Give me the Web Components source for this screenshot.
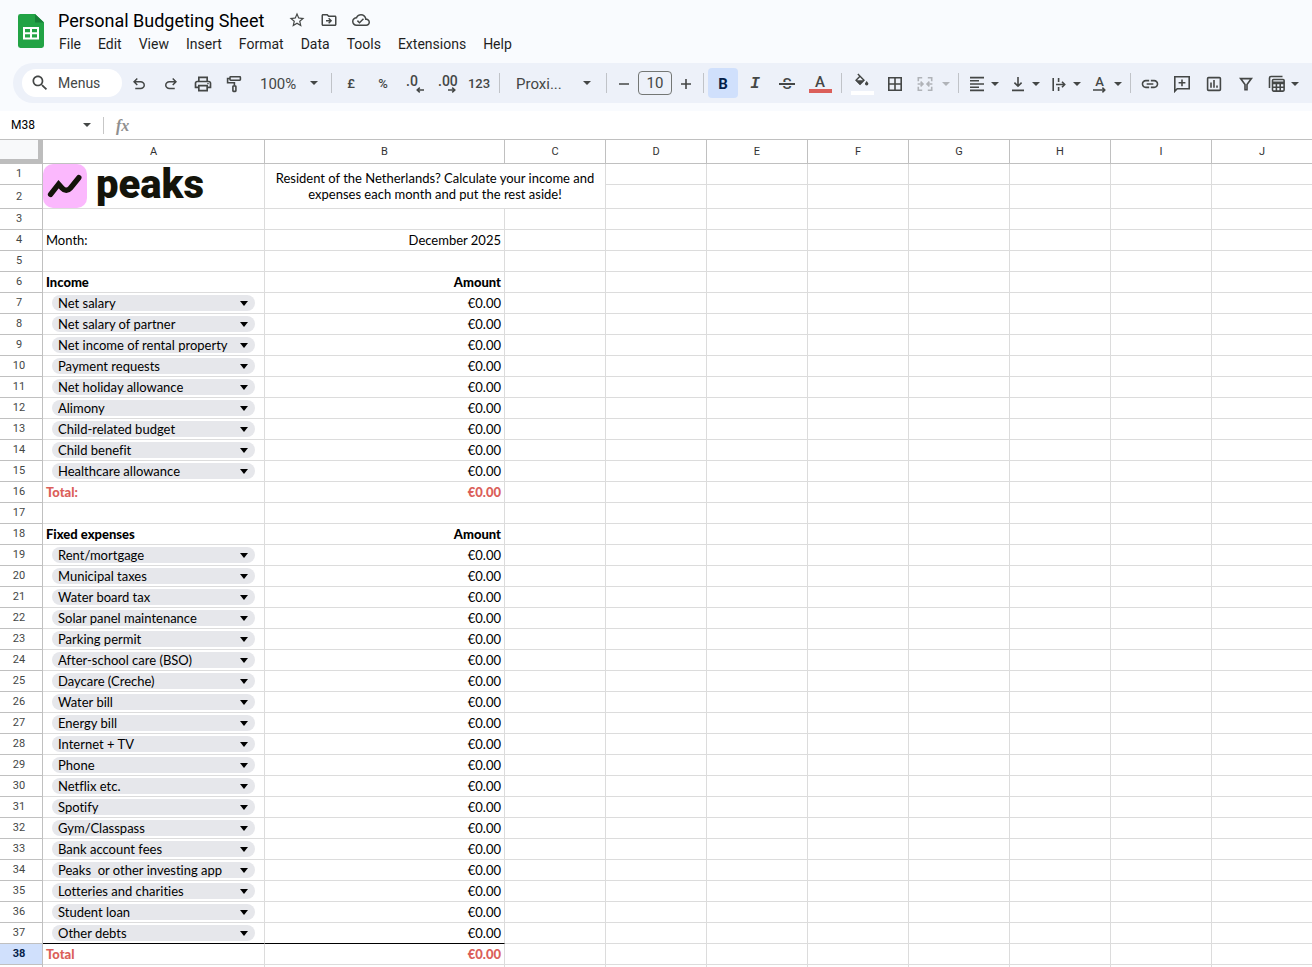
<!DOCTYPE html>
<html lang="en">
<head>
<meta charset="utf-8">
<meta name="viewport" content="width=device-width, initial-scale=1">
<title>Personal Budgeting Sheet</title>
<style>
  html, body {
    height: 100%;
  }

  body {
    margin: 0;
    overflow: hidden;
    background: #f9fbfe;
    color: #1f1f1f;
    font-family: Roboto, "Liberation Sans", sans-serif;
  }
</style>
</head>
<body>
<budget-app></budget-app>

<script>
// Icon bodies. Entries drawn on the 24 grid are filled, the 20 grid ones are stroked.
const ICONS = {
  star: [24, `<path d="M22 9.24l-7.19-.62L12 2 9.19 8.63 2 9.24l5.46 4.73L5.82 21 12 17.27 18.18 21l-1.63-7.03L22 9.24zM12 15.4l-3.76 2.27 1-4.28-3.32-2.88 4.38-.38L12 6.1l1.71 4.04 4.38.38-3.32 2.88 1 4.28L12 15.4z"/>`],
  move: [24, `<path d="M20 6h-8l-2-2H4c-1.1 0-2 .9-2 2v12c0 1.1.9 2 2 2h16c1.1 0 2-.9 2-2V8c0-1.1-.9-2-2-2zm0 12H4V6h5.17l2 2H20v10z"/><path d="M12.2 17l4-4-4-4-1.3 1.3 1.7 1.7H8v2h4.6l-1.7 1.7z"/>`],
  cloud: [24, `<path d="M19.35 10.04C18.67 6.59 15.64 4 12 4 9.11 4 6.6 5.64 5.35 8.04 2.34 8.36 0 10.91 0 14c0 3.31 2.69 6 6 6h13c2.76 0 5-2.24 5-5 0-2.64-2.05-4.78-4.65-4.96zM19 18H6c-2.21 0-4-1.79-4-4s1.79-4 4-4h.71C7.37 7.69 9.48 6 12 6c3.04 0 5.5 2.46 5.5 5.5v.5H19c1.66 0 3 1.34 3 3s-1.34 3-3 3zm-9-3.82l-2.09-2.09L6.5 13.5 10 17l6.01-6.01-1.41-1.41z"/>`],
  search: [24, `<path d="M15.5 14h-.79l-.28-.27C15.41 12.59 16 11.11 16 9.5 16 5.91 13.09 3 9.5 3S3 5.91 3 9.5 5.91 16 9.5 16c1.61 0 3.09-.59 4.23-1.57l.27.28v.79l5 4.99L20.49 19l-4.99-5zm-6 0C7.01 14 5 11.99 5 9.5S7.01 5 9.5 5 14 7.01 14 9.5 11.99 14 9.5 14z"/>`],
  undo: [24, `<path d="M7 19v-2h7.1q1.575 0 2.737-1Q18 15 18 13.5T16.838 11Q15.675 10 14.1 10H7.8l2.6 2.6L9 14 4 9l5-5 1.4 1.4L7.8 8h6.3q2.425 0 4.163 1.575Q20 11.15 20 13.5t-1.737 3.925Q16.525 19 14.1 19Z"/>`],
  redo: [24, `<path transform="matrix(-1 0 0 1 24 0)" d="M7 19v-2h7.1q1.575 0 2.737-1Q18 15 18 13.5T16.838 11Q15.675 10 14.1 10H7.8l2.6 2.6L9 14 4 9l5-5 1.4 1.4L7.8 8h6.3q2.425 0 4.163 1.575Q20 11.15 20 13.5t-1.737 3.925Q16.525 19 14.1 19Z"/>`],
  print: [24, `<path d="M19 8h-1V3H6v5H5c-1.66 0-3 1.34-3 3v6h4v4h12v-4h4v-6c0-1.66-1.34-3-3-3zM8 5h8v3H8V5zm8 12v2H8v-4h8v2zm2-2v-2H6v2H4v-4c0-.55.45-1 1-1h14c.55 0 1 .45 1 1v4h-2z"/><circle cx="18" cy="11.5" r="1"/>`],
  link: [24, `<path d="M3.9 12c0-1.71 1.39-3.1 3.1-3.1h4V7H7c-2.76 0-5 2.24-5 5s2.24 5 5 5h4v-1.9H7c-1.71 0-3.1-1.39-3.1-3.1zM8 13h8v-2H8v2zm9-6h-4v1.9h4c1.71 0 3.1 1.39 3.1 3.1s-1.39 3.1-3.1 3.1h-4V17h4c2.76 0 5-2.24 5-5s-2.24-5-5-5z"/>`],
  paint: [20, `<rect x="5" y="2.8" width="10.4" height="3.4" rx=".6"/><path d="M5 4.5H2.6v4.3h6.8v3"/><rect x="7.9" y="12" width="3" height="5.4" rx=".6"/>`],
  minus: [20, `<path d="M5 10h10"/>`],
  plus: [20, `<path d="M5 10h10M10 5v10"/>`],
  bucket: [20, `<path d="M5.4 1.2l6.8 6.8-4.4 4.4L3.4 8l4.4-4.4"/><path fill="currentColor" stroke="none" d="M3 8h9.6l-4.8 5z"/><path fill="currentColor" stroke="none" d="M15.2 8.8c1.2 1.6 1.9 2.4 1.9 3.2a1.9 1.9 0 0 1-3.8 0c0-.8.7-1.6 1.9-3.2z"/>`],
  borders: [20, `<path d="M3.8 3.8h12.4v12.4H3.8zM10 3.8v12.4M3.8 10h12.4"/>`],
  merge: [20, `<path d="M7.2 3.8H3.3v3.4M12.8 3.8h3.9v3.4M7.2 16.2H3.3v-3.4M12.8 16.2h3.9v-3.4M2.6 10h5M5.6 7.6L8 10l-2.4 2.4M17.4 10h-5M14.4 7.6L12 10l2.4 2.4"/>`],
  align: [20, `<path d="M3 3.6h14M3 6.8h9M3 10h14M3 13.2h9M3 16.4h14"/>`],
  bottom: [20, `<path d="M10 3v9M6.4 8.6L10 12.2l3.6-3.6M4 16.4h12"/>`],
  wrap: [20, `<path d="M4.2 4v13M9.6 4v4M9.6 13v4M7 10.5h8.6M13 7.8l2.7 2.7-2.7 2.7"/>`],
  comment: [20, `<path d="M2.8 17.2V2.8h14.4v12H5.2zM10 5.4v6.8M6.6 8.8h6.8"/>`],
  chart: [20, `<rect x="3.6" y="3.6" width="12.8" height="12.8" rx="1"/><path d="M7 8.6v5.2M10 6v7.8M13 11.4v2.4"/>`],
  filter: [20, `<path d="M4.6 4.6h10.8L11 10.4v5.4H9v-5.4z"/>`],
  tables: [20, `<path d="M2.5 14V4q0-1.5 1.5-1.5h11.5"/><rect x="5.5" y="5.5" width="11.6" height="11.6" rx="1"/><path d="M5.5 8.2h11.6M5.5 9.4h11.6M5.5 13.2h11.6M9.4 9v8M13.2 9v8"/>`]
};

class SheetIcon extends HTMLElement {
  connectedCallback() {
    const [grid, body] = ICONS[this.getAttribute("name")];
    const paint = grid === 24
      ? 'fill="currentColor"'
      : 'fill="none" stroke="currentColor" stroke-width="1.6"';
    this.attachShadow({ mode: "open" }).innerHTML = `
      <style>
        :host { display: block; flex: none; width: 20px; height: 20px; }
        :host([small]) { width: 18px; height: 18px; }
        svg { display: block; width: 100%; height: 100%; }
      </style>
      <svg viewBox="0 0 ${grid} ${grid}" ${paint} aria-hidden="true">${body}</svg>
    `;
  }
}

// Small downward triangle used by every drop-down
class DropArrow extends HTMLElement {
  connectedCallback() {
    this.attachShadow({ mode: "open" }).innerHTML = `
      <style>
        :host {
          display: block;
          flex: none;
          width: 0;
          height: 0;
          border: 4px solid transparent;
          border-top-color: currentColor;
          border-bottom-width: 0;
          pointer-events: none;
        }
        :host([large]) { border-top-width: 5px; }
      </style>
    `;
  }
}

class ToolButton extends HTMLElement {
  connectedCallback() {
    const arrow = this.hasAttribute("menu") ? "<drop-arrow></drop-arrow>" : "";
    const off = this.hasAttribute("off") ? "disabled" : "";
    this.attachShadow({ mode: "open" }).innerHTML = `
      <style>
        :host { display: block; flex: none; width: 32px; }
        :host([narrow]) { width: 27px; }
        :host([wide]) { width: 34px; }
        :host([menu]) { width: 41px; }
        :host([menu][off]) { width: 43px; }
        button {
          display: flex;
          align-items: center;
          justify-content: center;
          gap: 4px;
          box-sizing: border-box;
          width: calc(100% - 2px);
          height: 30px;
          margin: 0 1px;
          padding: 2px 0 0;
          border: 0;
          border-radius: 4px;
          background: none;
          color: #444746;
          font: 500 13px/16px Roboto, "Liberation Sans", sans-serif;
        }
        :host([menu][off]) button { gap: 7px; }
        :host([pressed]) button { background: #d0e0fc; color: #041e49; }
        button:disabled { color: #b0b3b8; }
      </style>
      <button type="button" aria-label="${this.getAttribute("label")}" ${off}><slot></slot>${arrow}</button>
    `;
  }
}

class ToolDivider extends HTMLElement {
  connectedCallback() {
    this.attachShadow({ mode: "open" }).innerHTML = `
      <style>
        :host { display: flex; flex: none; justify-content: center; width: 8px; }
        span { width: 1px; height: 20px; background: #c0c3c8; }
      </style>
      <span></span>
    `;
  }
}

class ToolSelect extends HTMLElement {
  connectedCallback() {
    this.attachShadow({ mode: "open" }).innerHTML = `
      <style>
        :host { display: grid; flex: none; align-items: center; width: 76px; color: #444746; }
        :host([font]) { width: 99px; }
        select, drop-arrow { grid-area: 1 / 1; }
        select {
          appearance: none;
          width: 100%;
          height: 30px;
          margin: 0;
          padding: 2px 20px 0 9px;
          border: 0;
          background: none;
          color: inherit;
          font: 400 15px/18px Roboto, "Liberation Sans", sans-serif;
        }
        :host([font]) select { padding-left: 13px; }
        drop-arrow { justify-self: end; margin-right: 9px; }
        :host([font]) drop-arrow { margin-right: 11px; }
      </style>
      <select aria-label="${this.getAttribute("label")}"><option>${this.getAttribute("value")}</option></select>
      <drop-arrow></drop-arrow>
    `;
  }
}

class SheetHeader extends HTMLElement {
  connectedCallback() {
    const menus = ["File", "Edit", "View", "Insert", "Format", "Data", "Tools", "Extensions", "Help"];
    this.attachShadow({ mode: "open" }).innerHTML = `
      <style>
        :host { display: flex; padding: 6px 16px 9px 18px; }
        .logo { flex: none; width: 26px; height: 34px; margin: 8px 7px 0 0; }
        .title { display: flex; align-items: center; height: 28px; padding-left: 7px; }
        h1 { margin: 0 24px 0 0; padding-top: 2px; color: #000; font-size: 18px; font-weight: 400; line-height: 26px; }
        .icons { display: flex; gap: 14px; }
        nav { display: flex; gap: 1px; height: 20px; }
        button {
          display: flex;
          align-items: center;
          padding: 0;
          border: 0;
          background: none;
          color: #444746;
        }
        nav button { padding: 0 8px; color: #1f1f1f; font: 400 14px/20px Roboto, "Liberation Sans", sans-serif; }
      </style>
      <svg class="logo" viewBox="0 0 26 34" aria-hidden="true">
        <path fill="#22a345" d="M2.400 0H17l9 8.500V31.600A2.400 2.400 0 0 1 23.600 34H2.400A2.400 2.400 0 0 1 0 31.600V2.400A2.400 2.400 0 0 1 2.400 0z"/>
        <path fill="#178038" d="M17 0l9 8.500h-9z"/>
        <path fill="#fff" fill-rule="evenodd" d="M5 13h16v12.500H5zM7 15v3.200h5V15zM14 15v3.200h5V15zM7 20.200v3.200h5v-3.200zM14 20.200v3.200h5v-3.200z"/>
      </svg>
      <div>
        <div class="title">
          <h1>Personal Budgeting Sheet</h1>
          <div class="icons">
            <button type="button" aria-label="Star"><sheet-icon small name="star"></sheet-icon></button>
            <button type="button" aria-label="Move"><sheet-icon small name="move"></sheet-icon></button>
            <button type="button" aria-label="Document status"><sheet-icon small name="cloud"></sheet-icon></button>
          </div>
        </div>
        <nav>${menus.map((menu) => `<button type="button">${menu}</button>`).join("")}</nav>
      </div>
    `;
  }
}

class SheetToolbar extends HTMLElement {
  connectedCallback() {
    this.attachShadow({ mode: "open" }).innerHTML = `
      <style>
        :host {
          display: flex;
          align-items: center;
          height: 40px;
          margin: 0 0 8px 13px;
          padding-left: 9px;
          border-radius: 20px 0 0 20px;
          background: #edf1f9;
          overflow: hidden;
        }
        .menus {
          display: flex;
          flex: none;
          align-items: center;
          gap: 8px;
          width: 100px;
          height: 28px;
          margin-right: 1px;
          padding: 0 8px;
          border: 0;
          border-radius: 14px;
          background: #fff;
          color: #444746;
          font: 400 14px/20px Roboto, "Liberation Sans", sans-serif;
        }
        .size {
          box-sizing: border-box;
          flex: none;
          width: 34px;
          height: 24px;
          margin: 0 0 0 1px;
          padding: 0;
          border: 1px solid #747775;
          border-radius: 4px;
          background: none;
          color: #444746;
          font: 400 15px/20px Roboto, "Liberation Sans", sans-serif;
          text-align: center;
        }
        .decimal { display: flex; flex-direction: column; width: 18px; font-size: 14px; line-height: 12px; text-align: left; }
        .decimal svg { align-self: flex-end; width: 8px; height: 6px; }
        .bold { font-size: 15px; font-weight: 700; }
        .italic { font: italic 700 16px/16px "Liberation Mono", monospace; }
        .strike { position: relative; width: 16px; font-size: 15px; }
        .strike::after {
          content: "";
          position: absolute;
          inset: 6px 0 auto;
          height: 2px;
          border: solid #edf1f9;
          border-width: 1px 0;
          background: #444746;
        }
        .swatch { display: flex; flex-direction: column; align-items: center; font-size: 15px; line-height: 14px; }
        .swatch::after { content: ""; width: 23px; height: 4px; background: #db5f5a; }
        .fill { height: 22px; justify-content: space-between; }
        .fill sheet-icon { height: 18px; }
        .fill::after { background: #fff; }
        .rotate { display: flex; flex-direction: column; align-items: center; width: 20px; line-height: 11px; }
        .rotate svg { width: 13px; height: 6px; }
        svg { fill: none; stroke: currentColor; stroke-width: 1.5; }
      </style>
      <button class="menus" type="button"><sheet-icon name="search"></sheet-icon>Menus</button>
      <tool-button label="Undo"><sheet-icon small name="undo"></sheet-icon></tool-button>
      <tool-button label="Redo"><sheet-icon small name="redo"></sheet-icon></tool-button>
      <tool-button label="Print"><sheet-icon name="print"></sheet-icon></tool-button>
      <tool-button label="Paint format"><sheet-icon name="paint"></sheet-icon></tool-button>
      <tool-select label="Zoom" value="100%"></tool-select>
      <tool-divider></tool-divider>
      <tool-button label="Format as currency">£</tool-button>
      <tool-button label="Format as percent">%</tool-button>
      <tool-button label="Decrease decimal places">
        <span class="decimal">.0<svg viewBox="0 0 8 6"><path d="M8 3H1.500M3.800.6L1.200 3l2.600 2.400"/></svg></span>
      </tool-button>
      <tool-button label="Increase decimal places">
        <span class="decimal">.00<svg viewBox="0 0 8 6"><path d="M0 3h6.500M4.200.6L6.800 3 4.200 5.400"/></svg></span>
      </tool-button>
      <tool-button label="More formats">123</tool-button>
      <tool-divider></tool-divider>
      <tool-select font label="Font" value="Proxi..."></tool-select>
      <tool-divider></tool-divider>
      <tool-button narrow label="Decrease font size"><sheet-icon name="minus"></sheet-icon></tool-button>
      <input class="size" aria-label="Font size" value="10">
      <tool-button narrow label="Increase font size"><sheet-icon name="plus"></sheet-icon></tool-button>
      <tool-divider></tool-divider>
      <tool-button pressed label="Bold"><span class="bold">B</span></tool-button>
      <tool-button label="Italic"><span class="italic">I</span></tool-button>
      <tool-button label="Strikethrough"><span class="strike">S</span></tool-button>
      <tool-button wide label="Text color"><span class="swatch">A</span></tool-button>
      <tool-divider></tool-divider>
      <tool-button wide label="Fill color"><span class="swatch fill"><sheet-icon name="bucket"></sheet-icon></span></tool-button>
      <tool-button label="Borders"><sheet-icon name="borders"></sheet-icon></tool-button>
      <tool-button menu off label="Merge cells"><sheet-icon name="merge"></sheet-icon></tool-button>
      <tool-divider></tool-divider>
      <tool-button menu label="Horizontal align"><sheet-icon name="align"></sheet-icon></tool-button>
      <tool-button menu label="Vertical align"><sheet-icon name="bottom"></sheet-icon></tool-button>
      <tool-button menu label="Text wrapping"><sheet-icon name="wrap"></sheet-icon></tool-button>
      <tool-button menu label="Text rotation">
        <span class="rotate">A<svg viewBox="0 0 13 6"><path d="M0 3h11.500M9.400.6L11.800 3 9.400 5.400"/></svg></span>
      </tool-button>
      <tool-divider></tool-divider>
      <tool-button label="Insert link"><sheet-icon name="link"></sheet-icon></tool-button>
      <tool-button label="Insert comment"><sheet-icon name="comment"></sheet-icon></tool-button>
      <tool-button label="Insert chart"><sheet-icon name="chart"></sheet-icon></tool-button>
      <tool-button label="Create a filter"><sheet-icon name="filter"></sheet-icon></tool-button>
      <tool-button menu label="Table views"><sheet-icon name="tables"></sheet-icon></tool-button>
    `;
  }
}

class FormulaBar extends HTMLElement {
  connectedCallback() {
    this.attachShadow({ mode: "open" }).innerHTML = `
      <style>
        :host { display: flex; align-items: center; height: 28px; background: #fff; color: #444746; }
        input { min-width: 0; padding: 0; border: 0; outline: 0; background: none; color: #000; font: 400 12px/20px Roboto, "Liberation Sans", sans-serif; }
        .name { width: 72px; padding-left: 11px; }
        .formula { flex: 1; }
        .line { width: 1px; height: 17px; margin: 0 12px; background: #c7c7c7; }
        .fx { width: 24px; padding-top: 2px; color: #8f8f8f; font: italic 700 16px/20px "Liberation Serif", serif; }
      </style>
      <input class="name" aria-label="Name box" value="M38">
      <drop-arrow></drop-arrow>
      <span class="line"></span>
      <span class="fx">fx</span>
      <input class="formula" aria-label="Formula">
    `;
  }
}

// Drop-down chip inside a cell
class CellChip extends HTMLElement {
  connectedCallback() {
    this.attachShadow({ mode: "open" }).innerHTML = `
      <style>
        :host { display: grid; align-items: center; margin: 0 9px; color: #000; }
        select, drop-arrow { grid-area: 1 / 1; }
        select {
          appearance: none;
          width: 100%;
          height: 16px;
          margin: 0;
          padding: 0 18px 0 6px;
          border: 0;
          border-radius: 8px;
          background: #e6e7eb;
          color: inherit;
          font: inherit;
          font-variant-ligatures: none;
          line-height: 16px;
          white-space: pre;
        }
        drop-arrow { justify-self: end; margin-right: 7px; }
      </style>
      <select aria-label="Category"></select>
      <drop-arrow large></drop-arrow>
    `;
    this.shadowRoot.querySelector("select").add(new Option(this.getAttribute("value")));
  }
}

class PeaksLogo extends HTMLElement {
  connectedCallback() {
    this.attachShadow({ mode: "open" }).innerHTML = `
      <style>
        :host { display: flex; gap: 9px; height: 44px; color: #14140a; }
        svg { flex: none; width: 44px; height: 44px; }
        span { font: 900 40px/42px Roboto, "Liberation Sans", sans-serif; }
      </style>
      <svg viewBox="0 0 44 44" aria-hidden="true">
        <rect width="44" height="44" rx="10" fill="#fbb8fd"/>
        <path fill="none" stroke="#14140a" stroke-width="5.4" stroke-linecap="round" d="M7.600 30.400L15.600 20.200 19 24C21.500 27 25 27 27.500 24L35.800 13.700"/>
      </svg>
      <span>peaks</span>
    `;
  }
}

const INCOME = [
  "Net salary", "Net salary of partner", "Net income of rental property", "Payment requests",
  "Net holiday allowance", "Alimony", "Child-related budget", "Child benefit", "Healthcare allowance"
];

const EXPENSES = [
  "Rent/mortgage", "Municipal taxes", "Water board tax", "Solar panel maintenance", "Parking permit",
  "After-school care (BSO)", "Daycare (Creche)", "Water bill", "Energy bill", "Internet + TV", "Phone",
  "Netflix etc.", "Spotify", "Gym/Classpass", "Bank account fees", "Peaks\u00a0 or other investing app",
  "Lotteries and charities", "Student loan", "Other debts"
];

const chipRow = (value) => ({ a: `<cell-chip value="${value}"></cell-chip>`, b: "€0.00" });

// Rows 3 and up; the first two hold the merged banner cells
const ROWS = [
  {},
  { a: "Month:", b: "December 2025" },
  {},
  { a: "Income", b: "Amount", type: "bold" },
  ...INCOME.map(chipRow),
  { a: "Total:", b: "€0.00", type: "total" },
  {},
  { a: "Fixed expenses", b: "Amount", type: "bold" },
  ...EXPENSES.map(chipRow),
  { a: "Total", b: "€0.00", type: "total sum" }
];

class SheetGrid extends HTMLElement {
  connectedCallback() {
    const blanks = (count) => "<td></td>".repeat(count);
    const rows = ROWS.map((row, i) => `
      <tr class="${row.type || ""}">
        <th scope="row">${i + 3}</th>
        <td>${row.a || ""}</td>
        <td class="amount">${row.b || ""}</td>
        ${blanks(8)}
      </tr>`).join("");

    this.attachShadow({ mode: "open" }).innerHTML = `
      <style>
        :host { display: block; overflow: auto; scrollbar-width: none; border-top: 1px solid #c0c0c0; background: #fff; }
        table { table-layout: fixed; width: 1313px; border-collapse: separate; border-spacing: 0; }
        col { width: 101px; }
        .head { width: 43px; }
        .col-a { width: 222px; }
        .col-b { width: 240px; }
        th, td {
          box-sizing: border-box;
          height: 21px;
          border: solid #dcdcdc;
          border-width: 0 1px 1px 0;
        }
        th {
          padding: 0 4px 0 0;
          border-color: #c0c0c0;
          color: #444746;
          font: 400 11px/16px Roboto, "Liberation Sans", sans-serif;
        }
        thead th { height: 24px; padding: 0; color: #333; }
        thead th:first-child {
          border: solid #bdbdbd;
          border-width: 0 5px 5px 0;
          background: #f8f9fa;
        }
        td {
          padding: 0 3px;
          color: #000;
          font: 400 13px/16px Lato, "Liberation Sans", sans-serif;
          font-variant-ligatures: none;
          white-space: nowrap;
        }
        td:has(cell-chip) { padding: 0; }
        .tall > * { height: 24px; }
        .logo { padding: 0; vertical-align: top; }
        .intro { padding: 0 4px; text-align: center; white-space: normal; }
        .amount { text-align: right; }
        .bold td, .total td { font-weight: 900; }
        .total td { color: #db5f5a; }
        tr:has(+ .sum) td:nth-child(-n + 3) { border-bottom-color: #000; }
        .sum th { background: #d0e0fc; color: #041e49; font-weight: 700; }
      </style>
      <table>
        <colgroup>
          <col class="head"><col class="col-a"><col class="col-b"><col span="8">
        </colgroup>
        <thead>
          <tr><th></th>${[..."ABCDEFGHIJ"].map((letter) => `<th scope="col">${letter}</th>`).join("")}</tr>
        </thead>
        <tbody>
          <tr>
            <th scope="row">1</th>
            <td class="logo" rowspan="2"><peaks-logo></peaks-logo></td>
            <td class="intro" rowspan="2" colspan="2">Resident of the Netherlands? Calculate your income and expenses each month and put the rest aside!</td>
            ${blanks(7)}
          </tr>
          <tr class="tall"><th scope="row">2</th>${blanks(7)}</tr>
          ${rows}
          <tr><th></th>${blanks(10)}</tr>
        </tbody>
      </table>
    `;
  }
}

class BudgetApp extends HTMLElement {
  connectedCallback() {
    this.attachShadow({ mode: "open" }).innerHTML = `
      <style>
        :host { display: flex; flex-direction: column; height: 100vh; }
        sheet-header, sheet-toolbar, formula-bar { flex: none; }
        sheet-grid { flex: 1; min-height: 0; }
      </style>
      <sheet-header></sheet-header>
      <sheet-toolbar></sheet-toolbar>
      <formula-bar></formula-bar>
      <sheet-grid></sheet-grid>
    `;
  }
}

customElements.define("sheet-icon", SheetIcon);
customElements.define("drop-arrow", DropArrow);
customElements.define("tool-button", ToolButton);
customElements.define("tool-divider", ToolDivider);
customElements.define("tool-select", ToolSelect);
customElements.define("sheet-header", SheetHeader);
customElements.define("sheet-toolbar", SheetToolbar);
customElements.define("formula-bar", FormulaBar);
customElements.define("cell-chip", CellChip);
customElements.define("peaks-logo", PeaksLogo);
customElements.define("sheet-grid", SheetGrid);
customElements.define("budget-app", BudgetApp);
</script>
</body>
</html>
